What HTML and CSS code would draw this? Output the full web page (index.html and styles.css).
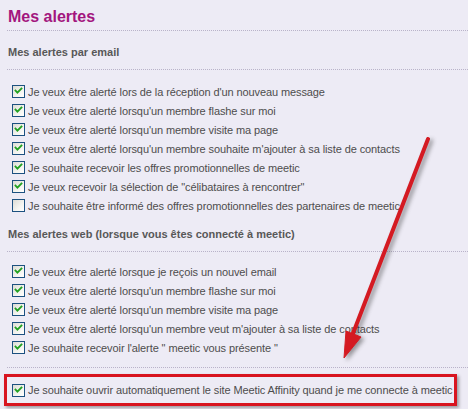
FILE: index.html
```html
<!DOCTYPE html>
<html lang="fr">
<head>
<meta charset="utf-8">
<title>Mes alertes</title>
<link rel="stylesheet" href="styles.css">
</head>
<body>
<div class="page">
  <h1 class="title">Mes alertes</h1>

  <h2 class="section">Mes alertes par email</h2>
  <ul class="list list-email">
    <li class="row"><span class="cb on"><svg viewBox="0 0 13 13"><path d="M3 5.5 L5.2 7.8 L10 3"/></svg></span>Je veux être alerté lors de la réception d'un nouveau message</li>
    <li class="row"><span class="cb on"><svg viewBox="0 0 13 13"><path d="M3 5.5 L5.2 7.8 L10 3"/></svg></span>Je veux être alerté lorsqu'un membre flashe sur moi</li>
    <li class="row"><span class="cb on"><svg viewBox="0 0 13 13"><path d="M3 5.5 L5.2 7.8 L10 3"/></svg></span>Je veux être alerté lorsqu'un membre visite ma page</li>
    <li class="row"><span class="cb on"><svg viewBox="0 0 13 13"><path d="M3 5.5 L5.2 7.8 L10 3"/></svg></span>Je veux être alerté lorsqu'un membre souhaite m'ajouter à sa liste de contacts</li>
    <li class="row"><span class="cb on"><svg viewBox="0 0 13 13"><path d="M3 5.5 L5.2 7.8 L10 3"/></svg></span>Je souhaite recevoir les offres promotionnelles de meetic</li>
    <li class="row"><span class="cb on"><svg viewBox="0 0 13 13"><path d="M3 5.5 L5.2 7.8 L10 3"/></svg></span>Je veux recevoir la sélection de "célibataires à rencontrer"</li>
    <li class="row"><span class="cb"></span>Je souhaite être informé des offres promotionnelles des partenaires de meetic</li>
  </ul>

  <h2 class="section section-web">Mes alertes web (lorsque vous êtes connecté à meetic)</h2>
  <ul class="list list-web">
    <li class="row"><span class="cb on"><svg viewBox="0 0 13 13"><path d="M3 5.5 L5.2 7.8 L10 3"/></svg></span>Je veux être alerté lorsque je reçois un nouvel email</li>
    <li class="row"><span class="cb on"><svg viewBox="0 0 13 13"><path d="M3 5.5 L5.2 7.8 L10 3"/></svg></span>Je veux être alerté lorsqu'un membre flashe sur moi</li>
    <li class="row"><span class="cb on"><svg viewBox="0 0 13 13"><path d="M3 5.5 L5.2 7.8 L10 3"/></svg></span>Je veux être alerté lorsqu'un membre visite ma page</li>
    <li class="row"><span class="cb on"><svg viewBox="0 0 13 13"><path d="M3 5.5 L5.2 7.8 L10 3"/></svg></span>Je veux être alerté lorsqu'un membre veut m'ajouter à sa liste de contacts</li>
    <li class="row"><span class="cb on"><svg viewBox="0 0 13 13"><path d="M3 5.5 L5.2 7.8 L10 3"/></svg></span>Je souhaite recevoir l'alerte " meetic vous présente "</li>
  </ul>

  <div class="highlight">
    <div class="row"><span class="cb on"><svg viewBox="0 0 13 13"><path d="M3 5.5 L5.2 7.8 L10 3"/></svg></span>Je souhaite ouvrir automatiquement le site Meetic Affinity quand je me connecte à meetic</div>
  </div>

  <svg class="arrow" viewBox="0 0 468 409" width="468" height="409">
    <line x1="428" y1="139" x2="352" y2="336" class="arrow-line"/>
    <polygon points="344,358 361,337 346,331" class="arrow-head"/>
  </svg>
</div>
</body>
</html>
```

FILE: styles.css
```css
html, body {
  margin: 0;
  padding: 0;
  background: #edebf5;
}

.page {
  position: relative;
  width: 468px;
  height: 409px;
  overflow: hidden;
  font-family: "Liberation Sans", Arial, sans-serif;
  font-size: 11px;
  color: #4d4d4d;
}

.title {
  margin: 0 0 0 7px;
  padding: 8px 0 5px 1px;
  font-size: 16px;
  line-height: 17px;
  font-weight: bold;
  color: #a3167e;
  border-bottom: 1px dotted #b9b3c9;
}

.section {
  margin: 0 0 0 7px;
  padding: 14px 0 10px 1px;
  font-size: 11px;
  line-height: 14px;
  font-weight: bold;
  color: #585858;
  border-bottom: 1px dotted #b9b3c9;
}

.section-web {
  padding-top: 12px;
}

.list {
  list-style: none;
  margin: 0 0 0 7px;
  padding: 12px 0 0 0;
}

.list-web {
  padding: 10px 0 10px 0;
  border-bottom: 1px dotted #b9b3c9;
}

.row {
  display: flex;
  align-items: center;
  height: 19px;
  padding-left: 5px;
  white-space: nowrap;
  letter-spacing: -0.1px;
}

.cb {
  box-sizing: border-box;
  flex: none;
  width: 13px;
  height: 13px;
  margin-right: 3px;
  border: 1px solid #1c5180;
  background: linear-gradient(135deg, #dcdcd5 0%, #f4f4f0 60%, #ffffff 100%);
  display: inline-flex;
}

.cb svg {
  width: 11px;
  height: 11px;
  margin: 0;
}

.cb svg path {
  fill: none;
  stroke: #21a121;
  stroke-width: 2.2;
  stroke-linecap: square;
  stroke-linejoin: miter;
}

.highlight {
  margin: 6px 0 0 4px;
  width: 453px;
  height: 32px;
  box-sizing: border-box;
  border: 3px solid #d8141f;
  box-shadow: 2px 2px 3px rgba(60, 60, 60, 0.45);
  display: flex;
  align-items: center;
}

.highlight .row {
  padding-left: 5px;
}

.arrow {
  position: absolute;
  left: 0;
  top: 0;
  pointer-events: none;
  filter: drop-shadow(3px 2px 2px rgba(40, 40, 40, 0.45));
}

.arrow-line {
  stroke: #d41a22;
  stroke-width: 4;
  stroke-linecap: round;
}

.arrow-head {
  fill: #d41a22;
  stroke: #d41a22;
  stroke-width: 1;
  stroke-linejoin: round;
}
```
